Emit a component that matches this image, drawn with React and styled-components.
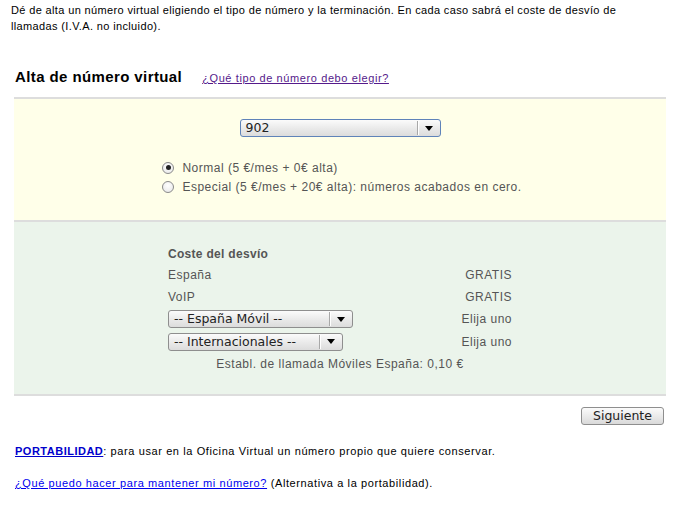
import React from 'react';
import styled, { createGlobalStyle } from 'styled-components';

const Global = createGlobalStyle`
  body {
    margin: 0;
    background: #fff;
    font-family: "Liberation Sans", Arial, sans-serif;
    color: #000;
  }
`;

const Page = styled.div`
  width: 698px;
  padding: 2px 0 0 0;
`;

const Intro = styled.p`
  margin: 0;
  padding-left: 11px;
  width: 648px;
  font-size: 11px;
  letter-spacing: 0.36px;
  line-height: 16px;
`;

const Main = styled.div`
  margin-left: 14px;
  width: 652px;
`;

const TitleRow = styled.div`
  display: flex;
  align-items: baseline;
  gap: 20px;
  margin-top: 34px;
  padding-left: 1px;
  height: 29px;
`;

const Title = styled.h2`
  margin: 0;
  font-size: 15px;
  letter-spacing: 0.4px;
  font-weight: bold;
`;

const SmallLink = styled.a`
  font-size: 11px;
  letter-spacing: 0.6px;
  color: ${p => (p.$visited ? '#551a8b' : '#0000ee')};
  text-decoration: underline;
  cursor: pointer;
`;

const Panel = styled.div`
  background: ${p => p.$bg};
  border-top: 2px solid #dddddd;
  border-bottom: ${p => (p.$last ? '2px solid #dddddd' : 'none')};
  padding: ${p => p.$pad};
  display: flex;
  flex-direction: column;
  align-items: center;
`;

const SelectBox = styled.div`
  display: flex;
  align-items: center;
  box-sizing: border-box;
  width: ${p => p.$w}px;
  height: 18px;
  border: 1px solid ${p => (p.$focus ? '#5f83b9' : '#8e8e8e')};
  border-radius: 3px;
  background: linear-gradient(#fbfbfb, #e9e9e9 55%, #dcdcdc);
  font-family: "DejaVu Sans", sans-serif;
  font-size: 12.5px;
  letter-spacing: 0;
  color: #222;
  padding-left: 5px;
`;

const SelectText = styled.span`
  flex: 1;
  line-height: 16px;
  white-space: nowrap;
`;

const SelectSep = styled.span`
  width: 1px;
  height: 14px;
  background: #a8a8a8;
  box-shadow: 1px 0 0 #fff;
`;

const ArrowBox = styled.span`
  width: 22px;
  display: flex;
  justify-content: center;
  align-items: center;
  &::after {
    content: '';
    border-left: 4px solid transparent;
    border-right: 4px solid transparent;
    border-top: 5px solid #000;
  }
`;

const Select = ({ w, focus, children }) => (
  <SelectBox $w={w} $focus={focus}>
    <SelectText>{children}</SelectText>
    <SelectSep />
    <ArrowBox />
  </SelectBox>
);

const Options = styled.div`
  margin-top: 21px;
  margin-left: 4px;
  display: flex;
  flex-direction: column;
`;

const Option = styled.label`
  display: flex;
  align-items: center;
  height: 19px;
  font-size: 12px;
  letter-spacing: 0.5px;
  color: #555;
  gap: 8px;
`;

const Radio = styled.span`
  box-sizing: border-box;
  width: 12px;
  height: 12px;
  border-radius: 50%;
  border: 1px solid #8a8a8a;
  background: radial-gradient(circle at 50% 35%, #ffffff, #e6e6e6);
  display: flex;
  align-items: center;
  justify-content: center;
  &::after {
    content: '';
    display: ${p => (p.$checked ? 'block' : 'none')};
    width: 5px;
    height: 5px;
    border-radius: 50%;
    background: #222;
  }
`;

const CostTable = styled.div`
  display: grid;
  grid-template-columns: 1fr auto;
  grid-template-rows: 20px 22px 22px 22px 23px 22px;
  align-items: center;
  width: 344px;
  font-size: 12px;
  letter-spacing: 0.5px;
  color: #555;
`;

const CostHead = styled.div`
  font-weight: bold;
  letter-spacing: 0.3px;
  grid-column: 1 / 3;
`;

const Right = styled.div`
  text-align: right;
`;

const Note = styled.div`
  grid-column: 1 / 3;
  text-align: center;
`;

const ButtonRow = styled.div`
  display: flex;
  justify-content: flex-end;
  padding-right: 2px;
  margin-top: 11px;
`;

const Button = styled.button`
  box-sizing: border-box;
  width: 83px;
  height: 18px;
  padding: 0;
  border: 1px solid #8e8e8e;
  border-radius: 3px;
  background: linear-gradient(#fbfbfb, #e9e9e9 55%, #d9d9d9);
  font-family: "DejaVu Sans", sans-serif;
  font-size: 12.5px;
  line-height: 16px;
  color: #222;
`;

const FootLine = styled.p`
  margin: ${p => p.$mt}px 0 0 1px;
  font-size: 11px;
  letter-spacing: 0.6px;
  line-height: 14px;
`;

const StrongLink = styled.a`
  color: #0000cc;
  font-weight: bold;
  letter-spacing: 0.5px;
  text-decoration: underline;
`;

export default function App() {
  return (
    <Page>
      <Global />
      <Intro>
        Dé de alta un número virtual eligiendo el tipo de número y la terminación. En cada caso
        sabrá el coste de desvío de llamadas (I.V.A. no incluido).
      </Intro>
      <Main>
        <TitleRow>
          <Title>Alta de número virtual</Title>
          <SmallLink $visited>¿Qué tipo de número debo elegir?</SmallLink>
        </TitleRow>
        <Panel $bg="#ffffe9" $pad="20px 0 24px">
          <Select w={201} focus>902</Select>
          <Options>
            <Option>
              <Radio $checked />
              Normal (5 €/mes + 0€ alta)
            </Option>
            <Option>
              <Radio />
              Especial (5 €/mes + 20€ alta): números acabados en cero.
            </Option>
          </Options>
        </Panel>
        <Panel $bg="#ebf4eb" $pad="22px 0 19px" $last>
          <CostTable>
            <CostHead>Coste del desvío</CostHead>
            <div>España</div>
            <Right>GRATIS</Right>
            <div>VoIP</div>
            <Right>GRATIS</Right>
            <div>
              <Select w={185}>-- España Móvil --</Select>
            </div>
            <Right>Elija uno</Right>
            <div>
              <Select w={175}>-- Internacionales --</Select>
            </div>
            <Right>Elija uno</Right>
            <Note>Establ. de llamada Móviles España: 0,10 €</Note>
          </CostTable>
        </Panel>
        <ButtonRow>
          <Button>Siguiente</Button>
        </ButtonRow>
        <FootLine $mt={19}>
          <StrongLink>PORTABILIDAD</StrongLink>: para usar en la Oficina Virtual un número propio
          que quiere conservar.
        </FootLine>
        <FootLine $mt={18}>
          <SmallLink>¿Qué puedo hacer para mantener mi número?</SmallLink> (Alternativa a la
          portabilidad).
        </FootLine>
      </Main>
    </Page>
  );
}
